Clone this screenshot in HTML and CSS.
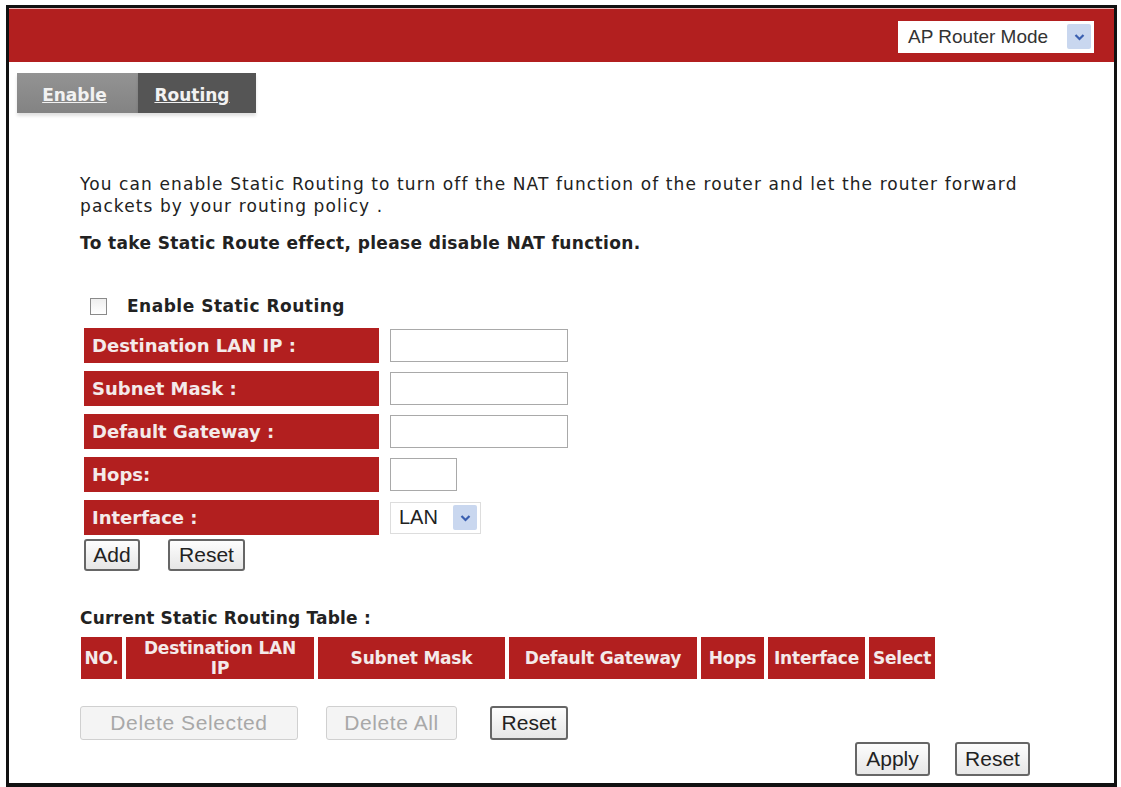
FILE: index.html
```html
<!DOCTYPE html>
<html lang="en">
<head>
  <meta charset="UTF-8">
  <title>Static Routing</title>
  <link rel="stylesheet" href="styles.css">
</head>
<body>
  <div class="frame">
    <div class="topbar">
      <div class="mode_select">
        <span class="mode_text">AP Router Mode</span>
        <span class="drop_btn"><svg width="11" height="8" viewBox="0 0 11 8"><path d="M1.5 2 L5.5 6 L9.5 2" fill="none" stroke="#3a5fb0" stroke-width="2.2"/></svg></span>
      </div>
    </div>

    <div class="tabs">
      <a class="tab tab_enable" href="#">Enable</a>
      <a class="tab tab_routing" href="#">Routing</a>
    </div>

    <div class="content">
      <p class="desc">You can enable Static Routing to turn off the NAT function of the router and let the router forward packets by your routing policy .</p>
      <p class="note">To take Static Route effect, please disable NAT function.</p>

      <label class="check_row">
        <input type="checkbox" class="check">
        <span>Enable Static Routing</span>
      </label>

      <div class="form_rows">
        <div class="form_row">
          <div class="label">Destination LAN IP :</div>
          <input type="text" class="field">
        </div>
        <div class="form_row">
          <div class="label">Subnet Mask :</div>
          <input type="text" class="field">
        </div>
        <div class="form_row">
          <div class="label">Default Gateway :</div>
          <input type="text" class="field">
        </div>
        <div class="form_row">
          <div class="label">Hops:</div>
          <input type="text" class="field field_short">
        </div>
        <div class="form_row">
          <div class="label">Interface :</div>
          <div class="if_select">
            <span>LAN</span>
            <span class="drop_btn"><svg width="11" height="8" viewBox="0 0 11 8"><path d="M1.5 2 L5.5 6 L9.5 2" fill="none" stroke="#3a5fb0" stroke-width="2.2"/></svg></span>
          </div>
        </div>
      </div>

      <div class="btn_row form_btns">
        <button type="button" class="btn btn_add">Add</button>
        <button type="button" class="btn btn_reset1">Reset</button>
      </div>

      <h3 class="table_title">Current Static Routing Table :</h3>
      <table class="route_table">
        <tr>
          <th class="c_no">NO.</th>
          <th class="c_dest">Destination LAN<br>IP</th>
          <th class="c_mask">Subnet Mask</th>
          <th class="c_gw">Default Gateway</th>
          <th class="c_hops">Hops</th>
          <th class="c_if">Interface</th>
          <th class="c_sel">Select</th>
        </tr>
      </table>

      <div class="btn_row table_btns">
        <button type="button" class="btn btn_dis btn_delsel" disabled>Delete Selected</button>
        <button type="button" class="btn btn_dis btn_delall" disabled>Delete All</button>
        <button type="button" class="btn btn_reset2">Reset</button>
      </div>

      <div class="btn_row bottom_btns">
        <button type="button" class="btn btn_apply">Apply</button>
        <button type="button" class="btn btn_reset3">Reset</button>
      </div>
    </div>
  </div>
</body>
</html>
```

FILE: styles.css
```css
:root {
  /* color */
  --color_red: #b21f1f;
}

* {
  box-sizing: border-box;
}

body {
  margin: 0;
  background: #fff;
  font-family: "DejaVu Sans", Verdana, sans-serif;
  color: #222;
}

.frame {
  width: 1111px;
  height: 782px;
  margin: 5px 0 0 6px;
  border: 3px solid #111;
  border-bottom-width: 4px;
  overflow: hidden;
}

.topbar {
  display: flex;
  justify-content: flex-end;
  align-items: center;
  height: 54px;
  padding: 2px 20px 0 0;
  border-top: 1px solid #e9b5b5;
  background: var(--color_red);
}

.mode_select {
  display: flex;
  align-items: center;
  justify-content: space-between;
  width: 196px;
  height: 32px;
  padding: 0 3px 0 10px;
  background: #fff;
  font-family: "Liberation Sans", Arial, sans-serif;
  font-size: 19px;
  color: #333;
}

.drop_btn {
  display: flex;
  align-items: center;
  justify-content: center;
  width: 24px;
  height: 25px;
  border-radius: 2px;
  background: #c9d7ef;
}

.tabs {
  display: flex;
  margin: 11px 0 0 8px;
  height: 44px;
}

.tab {
  height: 40px;
  padding-top: 12px;
  box-shadow: 0 3px 3px rgba(0, 0, 0, 0.12);
  color: #f2f2f2;
  font-size: 17px;
  font-weight: bold;
  line-height: 20px;
  text-align: center;
}

.tab_enable {
  width: 121px;
  background: linear-gradient(#939393, #838383);
  padding-right: 6px;
}

.tab_routing {
  width: 118px;
  background: #555;
  padding-right: 10px;
}

.content {
  padding-left: 71px;
}

.desc {
  margin: 56px 0 0;
  width: 1000px;
  font-size: 17px;
  letter-spacing: 1.1px;
  line-height: 22px;
  color: #222;
}

.note {
  margin: 15px 0 0;
  font-size: 17px;
  font-weight: bold;
  letter-spacing: 0.35px;
  line-height: 22px;
  color: #222;
}

.check_row {
  display: flex;
  align-items: center;
  gap: 20px;
  margin: 41px 0 0 10px;
  height: 22px;
  font-size: 17px;
  font-weight: bold;
  letter-spacing: 0.5px;
}

.check {
  appearance: none;
  width: 17px;
  height: 17px;
  margin: 0;
  border: 1px solid #8a8a8a;
  background: linear-gradient(#eee, #fff);
}

.form_rows {
  display: flex;
  flex-direction: column;
  gap: 8px;
  margin: 11px 0 0 4px;
}

.form_row {
  display: flex;
  align-items: center;
  gap: 11px;
  height: 35px;
}

.label {
  width: 295px;
  height: 35px;
  padding: 0 8px;
  background: var(--color_red);
  color: #f4eaea;
  font-size: 18px;
  font-weight: bold;
  line-height: 35px;
}

.field {
  width: 178px;
  height: 33px;
  margin: 0;
  border: 1px solid #a9a9a9;
  background: #fff;
}

.field_short {
  width: 67px;
}

.if_select {
  display: flex;
  align-items: center;
  justify-content: space-between;
  width: 91px;
  height: 32px;
  padding: 0 3px 0 8px;
  border: 1px solid #ddd;
  font-family: "Liberation Sans", Arial, sans-serif;
  font-size: 20px;
  color: #222;
}

.btn_row {
  display: flex;
  align-items: center;
}

.btn {
  height: 32px;
  margin: 0;
  padding: 0;
  border: 2px solid #666;
  border-radius: 3px;
  background: linear-gradient(#fdfdfd, #e6e6e6);
  font-family: "Liberation Sans", Arial, sans-serif;
  font-size: 21px;
  color: #222;
}

.form_btns {
  gap: 28px;
  margin: 4px 0 0 4px;
}

.btn_add {
  width: 56px;
}

.btn_reset1 {
  width: 77px;
}

.table_title {
  margin: 36px 0 0;
  height: 22px;
  font-size: 17px;
  font-weight: bold;
  letter-spacing: 0.2px;
  line-height: 22px;
  color: #222;
}

.route_table {
  margin: 8px 0 0 -3px;
  border-collapse: separate;
  border-spacing: 4px 0;
}

.route_table th {
  height: 42px;
  padding: 0;
  background: var(--color_red);
  color: #f4eaea;
  font-size: 17px;
  font-weight: bold;
  letter-spacing: -0.2px;
  line-height: 20px;
  text-align: center;
  white-space: nowrap;
}

.c_no { width: 41px; }
.c_dest { width: 188px; }
.c_mask { width: 187px; }
.c_gw { width: 188px; }
.c_hops { width: 63px; }
.c_if { width: 97px; }
.c_sel { width: 66px; }

.table_btns {
  gap: 28px;
  margin-top: 27px;
}

.btn_dis {
  border: 1px solid #d0d0d0;
  background: #f4f4f4;
  color: #a8a8a8;
  letter-spacing: 0.6px;
}

.btn_delsel {
  width: 218px;
  height: 34px;
}

.btn_delall {
  width: 131px;
  height: 34px;
}

.btn_reset2 {
  width: 78px;
  height: 34px;
  margin-left: 5px;
}

.bottom_btns {
  gap: 25px;
  margin: 2px 0 0 775px;
}

.btn_apply,
.btn_reset3 {
  width: 75px;
  height: 34px;
}
```
